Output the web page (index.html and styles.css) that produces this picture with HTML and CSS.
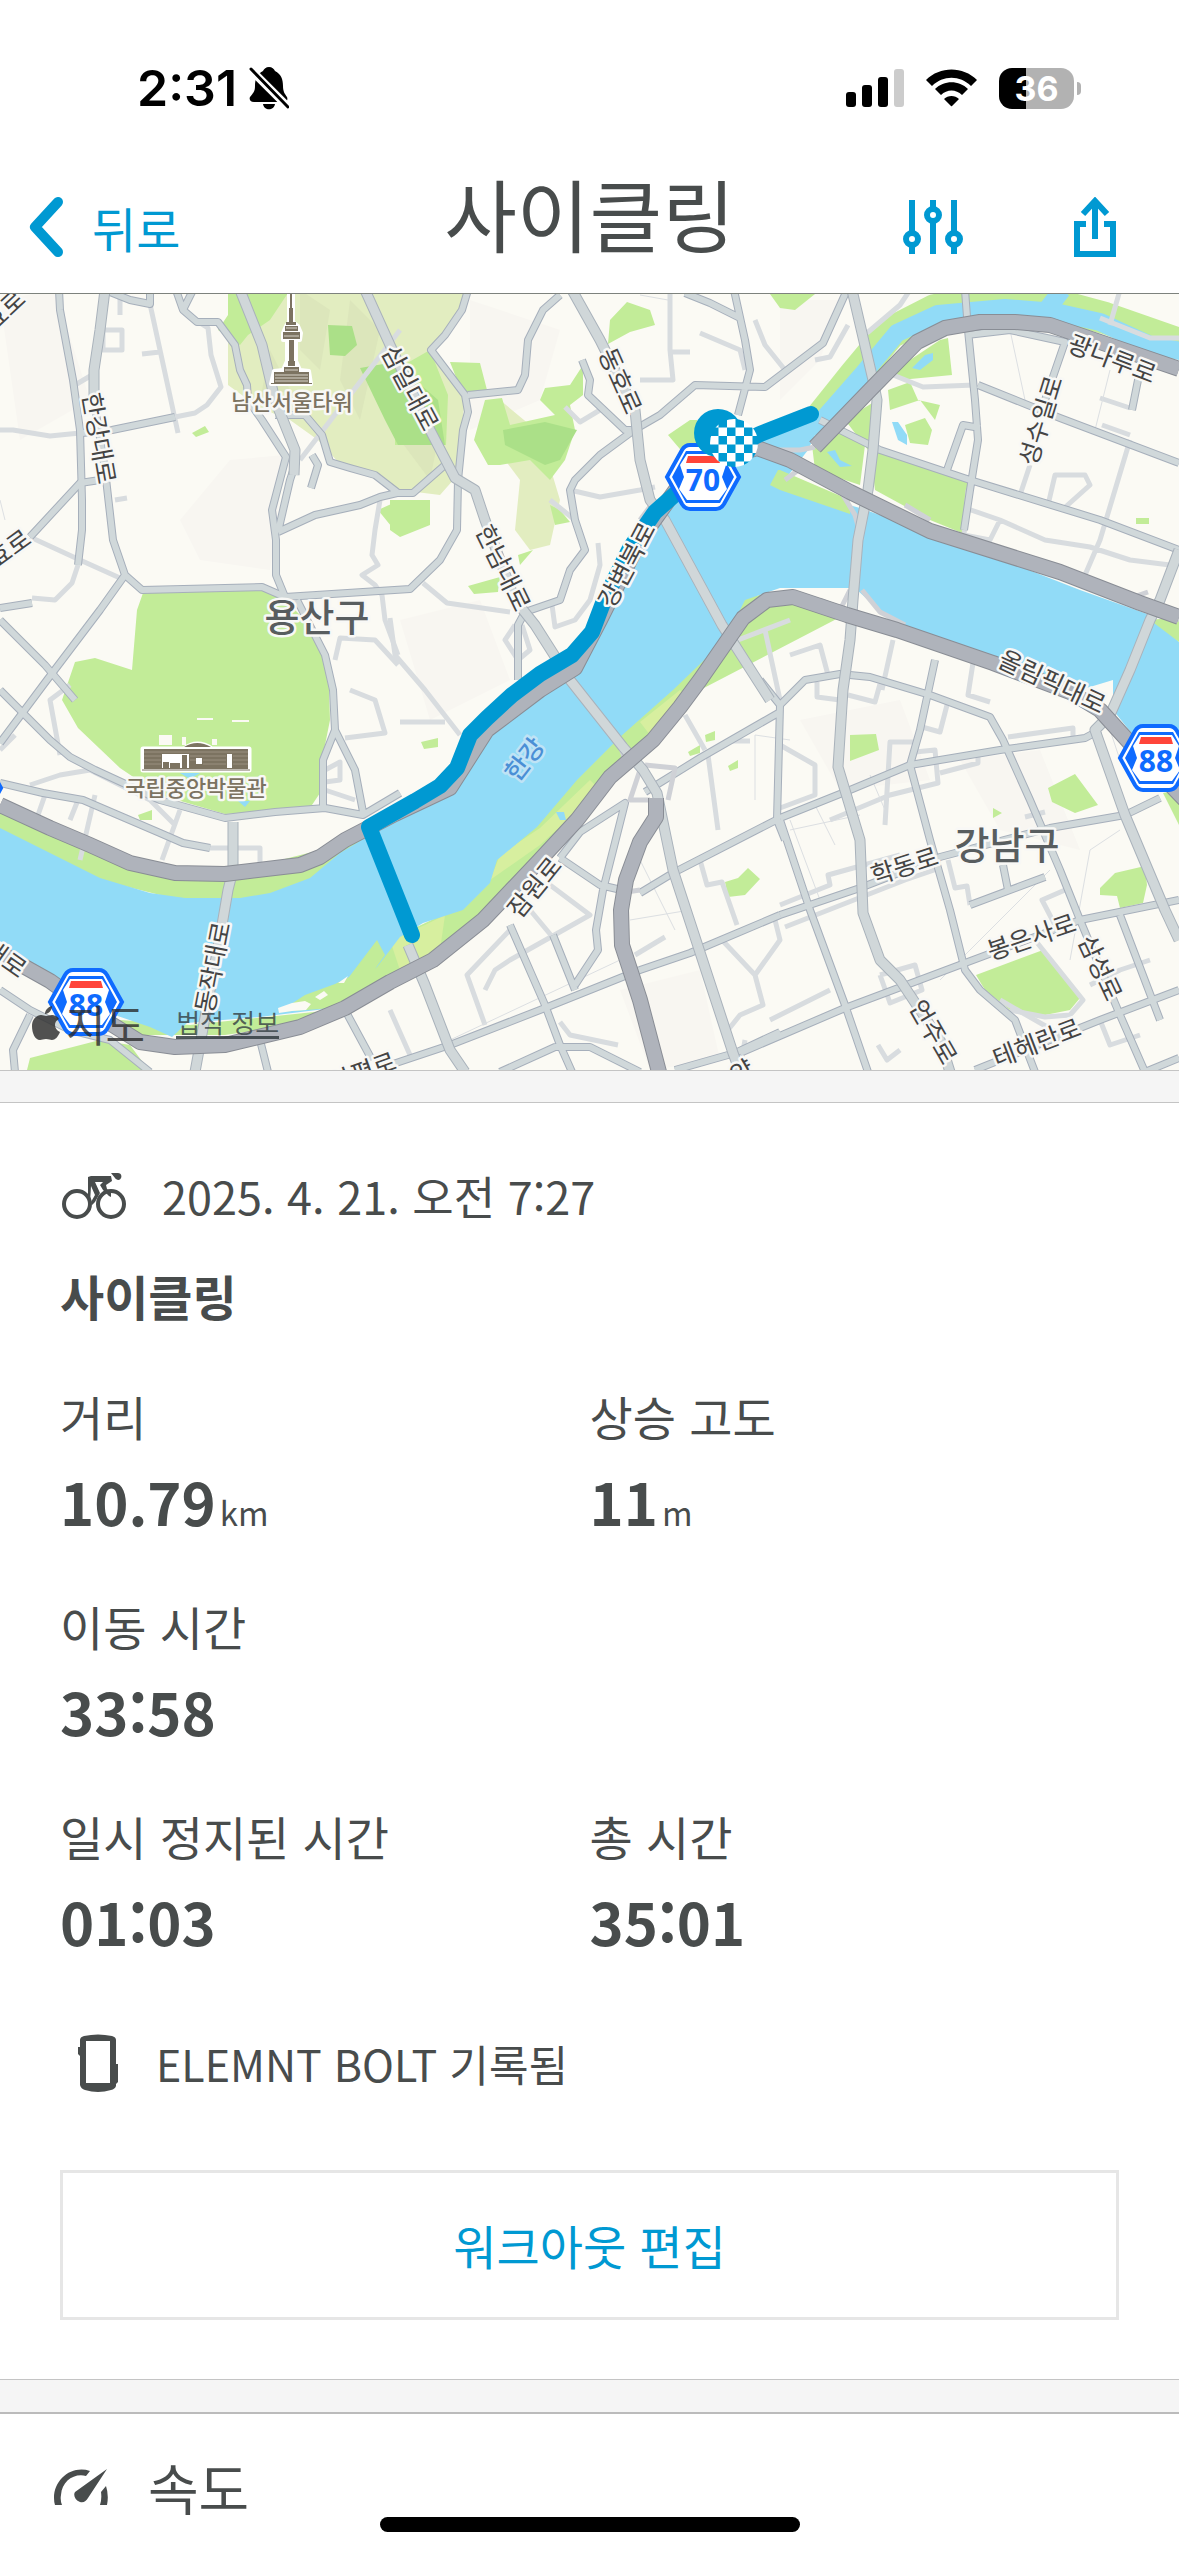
FILE: index.html
```html
<!DOCTYPE html>
<html lang="ko">

<head>
  <meta charset="UTF-8">
  <meta name="viewport" content="width=device-width, initial-scale=1.0">
  <title>사이클링</title>
  <link rel="stylesheet" href="styles.css">
</head>

<body>

  <div class="status-bar">
    <div class="status-left">
      <span class="clock">2:31</span>
      <svg class="bell" viewBox="0 0 40 44" aria-hidden="true">
        <path d="M20 1c3 0 5 2 6 4 6 3 8 8 8 15 0 6 2 8 4 11 1 3 0 5-3 5H5c-4 0-5-3-4-5 3-4 5-5 5-11C6 13 8 8 14 5c1-2 3-4 6-4zM14 38h12c-1 7-11 7-12 0z" />
        <path d="M-1 1L41 43" stroke="#fff" stroke-width="8" />
        <path d="M2 3L39 41" stroke="#000" stroke-width="3" stroke-linecap="round" />
      </svg>
    </div>
    <div class="status-right">
      <svg class="signal" viewBox="0 0 58 38" aria-hidden="true">
        <rect x="0" y="23" width="10" height="15" rx="3" />
        <rect x="16" y="16" width="10" height="22" rx="3" />
        <rect x="32" y="8" width="10" height="30" rx="3" />
        <rect x="48" y="0" width="10" height="38" rx="3" fill="#ccc" />
      </svg>
      <svg class="wifi" viewBox="0 0 51 38" aria-hidden="true">
        <path d="M0 11C14-3 37-3 51 11l-6 6C34 6 17 6 6 17zM9 20c9-9 24-9 33 0l-6 6c-6-6-15-6-21 0zM18 30c4-4 11-4 15 0l-7 7q-.5.5-1 0z" />
      </svg>
      <span class="battery"><span class="battery-level">36</span></span>
    </div>
  </div>

  <header class="nav-bar">
    <button type="button" class="back">
      <svg viewBox="0 0 36 60" aria-hidden="true"><path d="M30 5L7 30l23 25" /></svg>
      뒤로
    </button>
    <h1>사이클링</h1>
    <div class="nav-actions">
      <button type="button" aria-label="설정">
        <svg class="icon-sliders" viewBox="0 0 60 54" aria-hidden="true">
          <path d="M9 0v32M9 46v8M30 0v8M30 22v32M51 0v32M51 46v8" />
          <circle cx="9" cy="39" r="6" />
          <circle cx="30" cy="15" r="6" />
          <circle cx="51" cy="39" r="6" />
        </svg>
      </button>
      <button type="button" aria-label="공유">
        <svg class="icon-share" viewBox="0 0 42 60" aria-hidden="true">
          <path d="M12 27H3v30h36V27h-9M21 42V4M9 17L21 4l12 13" />
        </svg>
      </button>
    </div>
  </header>

  <main>
    <section class="map">
      <svg class="map-canvas" viewBox="0 294 1179 776" role="img" aria-label="라이딩 경로 지도">
        <defs>
          <!-- arterial roads, drawn twice: casing and fill -->
          <g id="roads">
            <path d="M59 290L60 310L73 380L80 430L82 500V530L78 565M94 400L105 470L113 540L125 575L100 610L47 680L0 743M125 575L142 590L262 587L285 597L410 589L440 560L457 530L458 480" />
            <path d="M82 433L112 430L175 417M110 292L130 300L150 304V290M183 310L197 322H218L235 345L240 370L247 385L248 400L262 420L286 457L272 510L276 540V575L285 597M176 290L183 310L193 290" />
            <path d="M275 415H305L322 435L330 462L350 468L375 475L397 492M278 532L315 515L360 505L380 497L397 493L413 493L445 465M278 532L290 480L296 462" />
            <path d="M0 608L32 603M0 620L45 665L75 700M30 537L80 483L100 480M312 455L318 465L311 488" />
            <path d="M297 600L325 655L333 690L335 730L355 770L363 812M335 730L323 760V808M0 783L43 793L83 800L160 833L183 843L210 848M0 690L50 740L70 757L95 770L160 800L225 818L275 812L325 808L363 815L400 793" />
            <path d="M468 290L462 310L445 335L431 350L465 395L468 412L463 430L458 480M468 395L518 390L525 375L528 340L543 310L560 295" />
            <path d="M634 430L660 415L695 385L765 387L823 343L847 290M582 360L590 380L588 395L625 430H634L600 455L575 480L570 490L575 520L585 550L570 570L560 600L525 612L518 625V680M734 290L745 340L750 370L738 415M685 293L710 303L740 318" />
            <path d="M967 335L1010 330L1065 342L1045 400M978 385L1060 418L1179 463M820 420L880 450L970 480L1100 520L1179 550M1140 370L1132 410M947 470L963 425L980 428M965 290L968 330L975 400L978 440L970 490L964 530" />
            <path d="M780 705L805 680L840 674L870 677L930 695L990 717L1003 740L1030 800L1060 870L1080 920L1120 1015L1145 1072M935 660L920 730L910 765L930 840L950 910L965 970L980 990L1015 1020L1035 1072" />
            <path d="M780 818L850 790L910 765L1000 750L1085 738L1100 730M780 915L860 888L940 857L1050 828L1125 815L1160 798M740 1053L845 1008L965 963L1080 920L1179 900M780 820L810 910L845 1005L868 1072M975 1070L1100 1020L1179 990M1120 915L1160 1020M970 905L1045 877M1003 865L1008 890M1145 1072L1179 1058" />
            <path d="M640 893L673 873L780 818M640 970L690 953L780 915M390 1065L450 1045L540 1010L640 970M510 925L545 1005L560 1045L572 1072M553 935L575 990M560 858L600 885L630 892M560 858L580 832L625 803L603 890L596 930L598 950L575 985M500 1072L555 1047H590L640 1072M675 1070L735 1053L780 1032M645 792L700 758L780 712M760 680L780 705L777 820L785 840" />
            <path d="M0 990L30 1010L70 1030L110 1040L150 1072M15 1072L13 1050L30 1015M260 1040L268 1072M345 1010L372 1060" />
          </g>
          <g id="avenues">
            <path d="M105 290L100 330L94 370V400M240 290L262 345L275 400L295 450L294 475M365 290L390 345L430 430L455 478L475 490L485 520L500 560L515 600L535 625L570 680L623 747L643 770L657 793L673 870L733 1053L740 1072" />
            <path d="M572 290L600 340L635 410L640 460L650 500L665 520L722 625L770 700" />
            <path d="M852 290L873 380L877 400L873 450L868 490L858 540L853 600L850 640L843 690L838 767L860 840L863 913L880 960L900 980L940 1040L950 1072" />
            <path d="M233 822V870L228 890L222 925L195 1072M1179 550L1160 600L1150 620L1130 670L1110 715L1095 730L1125 815L1165 910L1179 940M408 945L425 985L450 1050L465 1072" />
          </g>
          <g id="highways">
            <path d="M0 805L50 828L90 845L130 863L175 873L225 874L300 865L320 857L345 840L395 814L450 788L487 730L540 690L575 668L600 620L640 540L690 470L757 448L790 460L850 492L930 531L1060 572L1140 603L1179 617" />
            <path d="M815 447L870 390L917 342L945 328L980 322H1015L1050 325L1100 342L1179 369" />
            <path d="M0 953L50 981L100 1017L140 1042L175 1047L225 1045L300 1027L345 1008L390 982L433 960L483 920L537 863L577 820L610 777L653 740L680 707L700 680L743 618L767 600L793 597L847 615L897 630L993 663L1070 692L1100 710L1130 743L1185 800" />
            <path d="M656 798V817L640 842L626 880L621 910L622 945L640 1000L659 1072" />
          </g>
          <pattern id="checker" x="710" y="419" width="17" height="17" patternUnits="userSpaceOnUse">
            <rect width="17" height="17" fill="#fff" />
            <path d="M8.500 0h8.500v8.500h-8.500zM0 8.500h8.500v8.500H0z" fill="#0099d2" />
          </pattern>
          <g id="shield">
            <path d="M-36 0L-21 -27Q-18 -32 -13 -32H13Q18 -32 21 -27L36 0L21 27Q18 32 13 32H-13Q-18 32 -21 27Z" fill="#fff" stroke="#0f6bff" stroke-width="4" />
            <path d="M-31 0L-17 -26H17L31 0L17 26H-17Z" fill="#0f6bff" />
            <path d="M-16 -23H16L23 -12L19 0L24 12L16 23H-16L-24 12L-19 0L-23 -12Z" fill="#fff" />
            <path d="M-15 -21H15L17 -14H-17Z" fill="#ff453a" />
          </g>
        </defs>

        <rect x="0" y="290" width="1179" height="784" fill="#fbfaf4" />
        <!-- hill shading -->
        <g fill="#f8f6f1">
          <path d="M0 300L55 290L90 400L20 440ZM230 460L285 455L270 570L200 560L180 520Z" />
          <path d="M470 300L560 330L540 400L470 430ZM400 620L480 600L510 680L430 720ZM780 300L840 300L820 360L780 400Z" />
          <path d="M800 720L900 700L930 780L840 790ZM960 760L1040 750L1080 850L1000 830ZM620 990L700 970L720 1060L650 1070Z" />
        </g>

        <!-- parks -->
        <path class="hill" d="M228 290H470L462 312L432 350L465 400L455 478L440 495L400 490L340 464L318 440L290 420L260 408L228 385Z" />
        <path class="hill" d="M484 410L500 400L530 425L545 450L560 500L550 545L530 550L515 530L520 480L490 440Z" />
        <path d="M300 290L330 310L320 370L300 350ZM350 300L380 330L360 420L340 380ZM270 350L290 390L260 400ZM400 440L440 430L430 480Z" fill="#dce6bb" />
        <path class="park" d="M228 290H290L270 320L248 335L240 345L218 330L228 315ZM395 370L430 350L448 395L446 445H395ZM450 362L480 363L487 390L465 400ZM390 500L430 500L430 525L400 537L390 530ZM378 510L400 500V537Z" />
        <path class="wood" d="M328 325L352 326L357 345L345 356L330 355ZM360 368L395 362L438 400L445 445H398L385 420Z" />
        <path class="park" d="M485 400L502 398L510 425L555 415L540 400L545 388L570 385L583 365V395L570 405L575 430L565 460L550 480L530 460L500 465L488 465L474 440Z" />
        <path class="wood" d="M503 430L545 422L577 430L560 460L545 465L505 445Z" />
        <path class="park" d="M610 320L627 302L650 310L655 325L630 332L608 344ZM668 435L690 420H697L700 450L685 455ZM770 294H815L795 310L780 308ZM518 555L533 550L520 565ZM468 586L500 577L498 592L474 594ZM560 510L550 505L555 525L570 522ZM192 433L205 426L209 432L196 437Z" />
        <path class="park" d="M143 593L262 590L285 600L310 625L328 660L330 720L322 760V790L310 808L270 812L225 814L160 795L120 768L78 728L62 700L75 662L95 658L132 670L137 610Z" />
        <path d="M159 735H172V745H159ZM182 737H186V745H182ZM212 739H217V745H212ZM197 718H213V720H197ZM232 720H249V722H232Z" fill="#fbfaf4" />
        <path class="park" d="M845 420L877 400L868 450ZM812 445L845 430L865 445L860 485L815 470ZM870 450L970 480L962 533L930 520L875 490ZM895 370L940 340L948 338L952 375L900 380ZM888 390L910 382L918 400L940 405L935 420L920 400L890 410ZM905 425L925 418L932 430L928 445L910 443ZM1136 518H1149V524H1136Z" />
        <path class="park" d="M850 735L876 734L879 750L850 761ZM1048 788L1075 774L1098 805L1075 813L1052 802ZM993 808L1002 813L993 818ZM1100 888L1115 873L1145 866L1147 885L1143 903L1120 908L1117 896L1100 895ZM976 975L1043 950L1080 998L1070 1010L1045 1015L1010 1010L985 990ZM1163 793L1179 790V825Z" />
        <path class="park" d="M421 742L438 738V747L424 749ZM688 752L700 745V753L690 756ZM705 735L715 731V740L706 742ZM728 766L738 760V768L730 771ZM725 882L738 878L748 868L760 879L745 895L728 897ZM138 815L152 810V820H140ZM27 1070L30 1058L100 1040L130 1045L150 1072Z" />

        <!-- riverside green and water -->
        <path class="bank" d="M815 425L855 375L890 333L935 310L1005 300L1050 303L1105 318L1179 344" />
        <path class="park" d="M0 805L130 863L225 874L340 845L363 835V860L310 890L245 899L180 900L100 880L0 835Z" />
        <path class="park" d="M120 1020L190 1025L333 1010L400 935L463 905L500 855L573 778L650 700L700 660L730 600L790 590L850 612L700 690L480 925L330 1020L225 1035L120 1035Z" />
        <path class="meadow" d="M390 940L425 925L445 915L440 950L400 970ZM500 855L540 828L590 780L600 790L540 845L490 880ZM640 722L680 690L690 700L650 735Z" />
        <path class="water" d="M0 828L40 848L100 878L150 893L185 898H240L270 893L310 878L340 853L365 838L440 790L470 755L500 715L555 680L575 665L600 620L630 560L665 515L700 480L740 440L815 410L822 420L808 450L780 486L860 508L965 545L1080 590L1150 615L1179 642V735H1133L1113 710V680L1080 690L1000 660L895 625L855 588H780L745 600L725 640L673 690L620 737L577 780L537 827L497 860L490 883L463 910L423 923L400 937L377 967L350 985L333 1008L260 1017L187 1023L172 1037L150 1027L100 1010L50 978L0 948Z" />
        <path class="park" d="M780 470L850 500V514L780 490L770 485L778 470ZM1150 620L1179 617V642Z" />
        <path class="stream" d="M812 432L862 375L897 333L938 314L1005 308L1055 312L1100 322L1150 345L1185 352M1045 312L1062 290" />
        <path class="water" d="M912 368L925 355L933 353V360L920 370ZM892 422L898 422L907 435V445L898 440ZM827 452L835 450L840 460L852 466L840 467ZM180 773H200L190 779ZM238 801H250L245 807ZM556 812H564L566 820H560Z" />
        <path class="park" d="M279 1012L305 995L335 984L349 977L377 940L385 955L360 990L333 1008Z" />
        <path d="M278 1008L292 1003L305 1001L311 1004L306 1010L292 1011L279 1013ZM315 997L324 991L328 995L320 1000ZM338 983L348 976L344 983Z" fill="#fbfaf4" />

        <!-- local streets -->
        <path class="street" d="M0 430L13 430L50 436L80 433M150 304L160 350L178 433M192 318L208 328L211 355L221 387L207 405L195 413L175 417M400 330L300 460M30 537L80 560L120 578M32 598L55 600L72 583L78 565M380 500L375 530L372 555L378 565L362 575L375 585L382 595L385 620L398 655M335 660L340 638L375 640L398 665M103 330V350H122V330H103M120 290V315M142 354L160 352M92 375L75 385M115 500L127 498" />
        <path class="street" d="M670 290V350L673 380L640 380M670 352H690M700 333L740 350L745 370M755 320L765 345L785 370M570 490L600 497L640 490L655 487M423 583L447 603L510 612M550 500L575 520M565 407L580 422L600 410M598 543L600 565L590 600L575 620L555 627L552 605M390 618L395 655L425 690L460 735M515 625L505 640L518 660L530 650L522 625" />
        <path class="street" d="M867 333L900 305L910 290M815 360L830 357L848 325M893 375L923 387L975 385M965 508L1000 520L1045 540L1090 547L1130 560L1170 565M1130 440L1100 540L1085 575M1110 325L1120 290M1100 318L1150 338L1179 338M1020 495L1030 465M1048 505L1055 475H1085L1090 485L1062 510M1100 398L1130 408M1102 425L1130 435M968 490L964 535L990 540L1000 520" />
        <path class="street" d="M780 808L815 795V765L780 745M817 682V697L840 700M848 695L875 702L880 684M885 825L890 742H915M830 820L890 795L938 783L935 750L915 752M940 773L978 763V755M922 727L940 732L947 705M1008 737L1073 728V740M1025 817L1045 812M780 905L830 885L828 875L900 855M785 927L905 880L940 868M948 860L955 888L967 886L970 905M1055 925L1042 900L1065 890M880 975L915 965L922 990L890 1003L880 975M878 1045L887 1060L900 1050M1035 940L1083 1000L1070 1015L1045 1017L1010 1010M790 655L820 645L828 675M893 640L882 690M975 650L968 695L990 702" />
        <path class="street" d="M708 755L718 830M685 715L705 750M550 885L590 915L510 960L495 970L485 990M530 910L555 940M510 930L467 975L485 1025M700 860L707 885L722 882L737 925M775 920L780 940L755 975L722 940M755 975L763 1005L740 1015L728 1030M390 1010L410 1055M400 722H445M738 640L790 620M765 630L780 700M560 1022L570 1035L618 1045M750 741L730 741M635 955L665 937" />
        <path class="street" d="M30 785L60 775L90 770L150 800L175 825M95 795L80 860M45 795L38 815M180 810L162 860M78 800L70 820M60 755L50 700L70 685M0 750L15 735M210 848H260V870M740 1068L745 1040M770 1020L830 990M1000 1000L1070 1040M1090 985L1120 970L1150 960M1100 1020L1110 1045L1140 1035M355 800L325 790M325 770L340 762V780L325 782M345 738L385 733L375 700L350 690" />
        <path class="lane" d="M790 820L820 900M790 830L860 815M815 805L835 845M870 775L885 810M940 980L1050 870M1070 960L1090 850L1120 830M1010 330L1025 400M1110 370L1095 430M1100 700L1120 760M640 860L675 930M630 920L690 910M450 1040L620 960M755 800V735L790 740M5 520L0 500M640 295L668 300" />

        <use href="#roads" class="road-case" />
        <use href="#roads" class="road" />
        <path class="ramp" d="M760 450L800 450L815 447M785 480L805 465M840 490L855 515L862 540M905 505L930 520M850 590L840 610M862 590L880 612L905 625M850 612L820 600M1148 592L1125 600M1152 610L1179 620M620 745L625 760L600 790M645 765L675 768L668 800M640 770L630 800L650 800M640 890L620 893M655 500L640 520M725 635L735 650" />
        <use href="#avenues" class="avenue-case" />
        <use href="#avenues" class="avenue" />
        <use href="#highways" class="highway-case" />
        <use href="#highways" class="highway" />

        <!-- recorded track -->
        <path class="track" d="M811 414L760 434L718 455L672 497L655 512L630 548L603 603L592 632L572 655L540 674L512 695L487 718L470 735L457 768L440 786L415 801L369 827L412 935" />

        <!-- landmarks -->
        <g class="tower">
          <path d="M289 294H293V322L298 326L301 333L300 340H296V361L300 370L309 371L311 384H271L274 371L283 370L287 361V340H283V333L286 326L289 322Z" fill="#fff" stroke="#fff" stroke-width="4" stroke-linejoin="round" />
          <path d="M290 294h2v14h-2zM289 308h4v14h-4zM286 322h10v3h-10zM285 326h13v5h-13zM283 332h17v7h-17zM289 340h5v21h-5zM288 361h7v5h-7zM284 367h15v5h-15zM274 372h35v11h-35zM271 383h41v1h-41z" />
          <path d="M275 375h33M275 378h33M275 381h33M285 370h13M286 328h11M284 336h15" stroke="#d9d6cc" />
        </g>
        <g class="museum">
          <path d="M143 749h41q13-10 28 0h37v21H143z" fill="#fff" stroke="#fff" stroke-width="5" stroke-linejoin="round" />
          <path d="M144 749h104v20H144zM184 747q13-8 27 0z" />
          <path d="M142 770h108" stroke="#7c7361" />
          <path d="M162 754h27v14h-27zM196 758h6v6h-6zM227 754h5v14h-5z" fill="#fff" />
          <path d="M163 762h6v7h-6zM170 763h10v6h-10zM182 755h5v13h-5z" />
          <path d="M144 752h104M190 756h36M190 760h6M203 760h23M233 756h15M233 760h15M144 756h17M144 760h17M144 764h17M203 764h23M233 764h15" stroke="#999080" />
        </g>

        <use href="#shield" x="703" y="477" />
        <text class="route-no" x="703" y="491">70</text>
        <use href="#shield" x="86" y="1002" />
        <text class="route-no" x="86" y="1016">88</text>
        <use href="#shield" x="1156" y="758" />
        <text class="route-no" x="1156" y="772">88</text>
        <use href="#shield" x="-35" y="788" />

        <circle cx="718" cy="433" r="24" fill="#0099d2" />
        <circle cx="734" cy="443" r="24" fill="url(#checker)" />

        <g class="labels">
          <text transform="translate(101 438) rotate(80)">한강대로</text>
          <text transform="translate(412 387) rotate(62)">삼일대로</text>
          <text transform="translate(622 380) rotate(66)">동호로</text>
          <text transform="translate(505 567) rotate(64)">한남대로</text>
          <text transform="translate(625 564) rotate(-62)">강변북로</text>
          <text transform="translate(1113 357) rotate(21)">광나루로</text>
          <text transform="translate(1039 420) rotate(-73)">성수일로</text>
          <text transform="translate(1053 680) rotate(25)">올림픽대로</text>
          <text transform="translate(533 886) rotate(-51)">잠원로</text>
          <text transform="translate(211 967) rotate(-79)">동작대로</text>
          <text transform="translate(904 864) rotate(-18)">학동로</text>
          <text transform="translate(1031 935) rotate(-19)">봉은사로</text>
          <text transform="translate(1102 967) rotate(65)">삼성로</text>
          <text transform="translate(935 1031) rotate(60)">언주로</text>
          <text transform="translate(1036 1041) rotate(-21)">테헤란로</text>
          <text transform="translate(3 309) rotate(-43)">효로</text>
          <text transform="translate(8 547) rotate(-36)">효로</text>
          <text transform="translate(6 957) rotate(35)">대로</text>
          <text transform="translate(362 1070) rotate(-20)">사평로</text>
          <text transform="translate(741 1070) rotate(-30)">양</text>
          <text class="river" transform="translate(523 758) rotate(-52)">한강</text>
        </g>
        <g class="labels places">
          <text x="292" y="400">남산서울타워</text>
          <text x="196" y="786">국립중앙박물관</text>
        </g>
        <g class="labels districts">
          <text x="317" y="614">용산구</text>
          <text x="1007" y="842">강남구</text>
        </g>
      </svg>
      <div class="map-credit">
        <svg viewBox="0 0 28 34" aria-hidden="true">
          <path d="M20 0c0 4-3 8-7 8 0-4 3-7 7-8zM27 13c-6 3-5 10 1 13-2 5-5 8-8 8-2 0-3-1-6-1s-4 1-6 1C3 34 0 27 0 20 0 13 5 9 9 9c2 0 4 1 5 1 2 0 4-1 6-1 3 0 6 2 7 4z" />
        </svg>
        <span>지도</span>
        <a href="#legal">법적 정보</a>
      </div>
    </section>

    <section class="summary">
      <div class="when">
        <svg class="icon-bike" viewBox="0 0 64 46" aria-hidden="true">
          <circle cx="15" cy="31" r="13" />
          <circle cx="49" cy="31" r="13" />
          <path class="solid" d="M26 4l3-1h20l1 5-6 4 1 4 4 4v4l-2-1-6-6-3-5 3-3h-8l5 11-5 9-3 3-1-3 4-7-4-9-1 17-2-1z" />
          <path class="solid" d="M49 0h7c3 0 4 3 3 5-1 3-5 2-6 0z" />
        </svg>
        <time datetime="2025-04-21T07:27">2025. 4. 21. 오전 7:27</time>
      </div>
      <h2>사이클링</h2>

      <dl class="stats">
        <div>
          <dt>거리</dt>
          <dd>10.79<span class="unit">km</span></dd>
        </div>
        <div>
          <dt>상승 고도</dt>
          <dd>11<span class="unit">m</span></dd>
        </div>
        <div class="wide">
          <dt>이동 시간</dt>
          <dd>33:58</dd>
        </div>
        <div>
          <dt>일시 정지된 시간</dt>
          <dd>01:03</dd>
        </div>
        <div>
          <dt>총 시간</dt>
          <dd>35:01</dd>
        </div>
      </dl>

      <div class="device">
        <svg class="icon-device" viewBox="0 0 40 58" aria-hidden="true">
          <path fill-rule="evenodd" d="M2 6Q2 3 6 2Q20-1 34 2Q38 3 38 6V30H40V48L38 50V52Q37 55 33 56Q20 60 7 56Q3 55 2 51V22L0 20V13H2ZM8 7V49H32V7Z" />
        </svg>
        <span>ELEMNT BOLT 기록됨</span>
      </div>

      <button type="button" class="edit">워크아웃 편집</button>
    </section>

    <section class="speed">
      <svg class="icon-gauge" viewBox="0 0 54 37" aria-hidden="true">
        <path d="M36 2C18-4 0 10 0 29q0 4 1 7h7Q6 31 7 26C8 12 20 4 32 7zM53 0L21 23c-2 3 0 8 5 10 4 1 6-1 8-4zM52 17l-5 6q1 7-1 13h7q2-10-1-19z" />
      </svg>
      <h2>속도</h2>
    </section>
  </main>

  <div class="home-indicator"></div>

</body>

</html>
```

FILE: styles.css
```css
* {
  box-sizing: border-box;
}

body {
  margin: 0;
  background: #fff;
  color: #484c4c;
  font-family: "Noto Sans CJK KR", sans-serif;
}

h1,
h2,
dl,
dd {
  margin: 0;
}

button {
  padding: 0;
  border: none;
  background: none;
  color: #0099d2;
  font: inherit;
  cursor: pointer;
}

svg {
  display: block;
}

/* status bar */
.status-bar {
  display: flex;
  justify-content: space-between;
  align-items: center;
  padding: 58px 98px 0 137px;
  color: #000;
  font-family: Inter, sans-serif;
}

.status-left,
.status-right {
  display: flex;
  align-items: center;
}

.status-left {
  gap: 12px;
}

.status-right {
  gap: 22px;
}

.clock {
  font-size: 50px;
  font-weight: 600;
  line-height: 60px;
}

.bell {
  width: 40px;
  height: 44px;
}

.signal {
  width: 58px;
  height: 38px;
}

.wifi {
  width: 51px;
  height: 38px;
}

.battery {
  position: relative;
  width: 75px;
  margin-right: 7px;
  border-radius: 13px;
  background: linear-gradient(to right, #000 36%, #b2b2b2 36%);
  color: #fff;
  font-size: 34px;
  font-weight: 700;
  line-height: 41px;
  text-align: center;
}

.battery::after {
  content: "";
  position: absolute;
  top: 14px;
  right: -7px;
  width: 4px;
  height: 13px;
  border-radius: 0 4px 4px 0;
  background: #b2b2b2;
}

/* header */
.nav-bar {
  display: grid;
  grid-template-columns: 1fr auto 1fr;
  align-items: end;
  padding: 48px 28px 34px;
  border-bottom: 1px solid #7d827d;
}

.nav-bar h1 {
  padding-bottom: 0;
  font-size: 79px;
  font-weight: 400;
  line-height: 93px;
}

.back {
  display: flex;
  align-items: center;
  gap: 28px;
  font-size: 48px;
  line-height: 64px;
}

.back svg {
  width: 36px;
  height: 60px;
  fill: none;
  stroke: #0099d2;
  stroke-width: 10;
  stroke-linecap: round;
  stroke-linejoin: round;
}

.nav-actions {
  display: flex;
  justify-content: flex-end;
  align-items: center;
  gap: 111px;
  padding: 0 35px 2px 0;
}

.nav-actions svg {
  fill: none;
  stroke: #0099d2;
  stroke-width: 6;
}

.icon-sliders {
  width: 60px;
  height: 54px;
}

.icon-share {
  width: 42px;
  height: 60px;
}

/* map */
.map {
  position: relative;
}

.map-canvas {
  width: 100%;
  height: auto;
}

.hill { fill: #e2edc0; }
.park { fill: #c2ec98; }
.wood { fill: #abe088; }
.meadow { fill: #d7ef9f; }
.water { fill: #91dbf7; }

.bank,
.stream,
.street,
.lane,
.ramp,
.road,
.road-case,
.avenue,
.avenue-case,
.highway,
.highway-case,
.track {
  fill: none;
  stroke-linejoin: round;
}

.bank { stroke: #c2ec98; stroke-width: 32; }
.stream { stroke: #91dbf7; stroke-width: 18; }
.street { stroke: #d8dcdf; stroke-width: 5; }
.lane { stroke: #dcdfe2; stroke-width: 1; }
.ramp { stroke: #cfd1d6; stroke-width: 5; }
.road-case { stroke: #a6afbb; stroke-width: 8; }
.road { stroke: #d0d8da; stroke-width: 6; }
.avenue-case { stroke: #a9b2bb; stroke-width: 11; }
.avenue { stroke: #d0d7d9; stroke-width: 9; }
.highway-case { stroke: #898d95; stroke-width: 16; }
.highway { stroke: #afb3bb; stroke-width: 14; }
.track { stroke: #0099d2; stroke-width: 16; stroke-linecap: round; }

.tower,
.museum {
  fill: #7c7361;
}

.labels text {
  fill: #444;
  stroke: #f8f8f6;
  stroke-width: 5px;
  stroke-linejoin: round;
  paint-order: stroke;
  font-size: 25px;
  text-anchor: middle;
  dominant-baseline: central;
}

.labels .river {
  fill: #4a8fd6;
  stroke: #bfe3f5;
  font-weight: 500;
}

.places text {
  fill: #7c7361;
  font-size: 22px;
  font-weight: 500;
}

.districts text {
  fill: #585d5f;
  font-size: 38px;
  font-weight: 500;
}

.route-no {
  fill: #0f6bff;
  font-family: "Noto Sans", sans-serif;
  font-size: 30px;
  font-weight: 700;
  text-anchor: middle;
}

.map-credit {
  position: absolute;
  left: 32px;
  bottom: 22px;
  display: flex;
  align-items: center;
  color: rgba(40, 40, 40, 0.8);
  font-size: 43px;
  line-height: 50px;
}

.map-credit svg {
  width: 28px;
  height: 34px;
  margin-right: 6px;
  fill: rgba(50, 50, 50, 0.85);
}

.map-credit a {
  margin-left: 31px;
  border-bottom: 3px solid rgba(50, 60, 65, 0.85);
  color: rgba(50, 60, 65, 0.8);
  font-size: 26px;
  line-height: 28px;
  text-decoration: none;
}

/* workout summary */
.summary {
  padding-bottom: 59px;
  border-top: 1px solid #c4c4c4;
  border-bottom: 1px solid #c4c4c4;
}

.summary > * {
  margin-left: 60px;
  margin-right: 60px;
}

.summary::before {
  content: "";
  display: block;
  height: 31px;
  border-bottom: 1px solid #c4c4c4;
  background: #f5f5f5;
}

.when,
.device {
  display: flex;
  align-items: center;
}

.when {
  gap: 36px;
  margin-top: 58px;
  padding-left: 2px;
  font-size: 45px;
  line-height: 70px;
}

.icon-bike {
  width: 64px;
  height: 46px;
  fill: none;
  stroke: #484c4c;
  stroke-width: 4;
}

.icon-bike .solid {
  fill: #484c4c;
  stroke: none;
}

.summary h2 {
  margin-top: 29px;
  font-size: 48px;
  font-weight: 700;
  line-height: 70px;
}

.stats {
  display: grid;
  grid-template-columns: 1fr 1fr;
  row-gap: 50px;
  margin-top: 51px;
}

.stats .wide {
  grid-column: 1 / -1;
}

.stats dt {
  font-size: 47px;
  line-height: 70px;
}

.stats dd {
  margin-top: 10px;
  font-size: 58px;
  font-weight: 700;
  font-variant-ligatures: no-contextual;
  line-height: 80px;
}

.unit {
  margin-left: 4px;
  font-size: 33px;
  font-weight: 400;
  line-height: 1;
}

.device {
  gap: 38px;
  margin-top: 67px;
  padding-left: 18px;
  font-size: 43px;
  line-height: 70px;
}

.icon-device {
  width: 40px;
  height: 58px;
  fill: #484c4c;
}

.edit {
  display: block;
  width: calc(100% - 120px);
  margin-top: 72px;
  padding: 37px 0;
  border: 3px solid #e6e6e6;
  font-size: 47px;
  line-height: 70px;
}

/* speed */
.speed {
  display: flex;
  align-items: center;
  gap: 40px;
  padding: 0 54px;
  border-top: 32px solid #f5f5f5;
  box-shadow: inset 0 2px #bbb;
}

.icon-gauge {
  width: 54px;
  height: 37px;
  margin-top: 6px;
  fill: #484c4c;
}

.speed h2 {
  padding: 34px 0 30px;
  font-size: 55px;
  font-weight: 400;
  line-height: 80px;
}

.home-indicator {
  position: fixed;
  bottom: 24px;
  left: 50%;
  width: 420px;
  height: 15px;
  margin-left: -210px;
  border-radius: 8px;
  background: #000;
}
```
